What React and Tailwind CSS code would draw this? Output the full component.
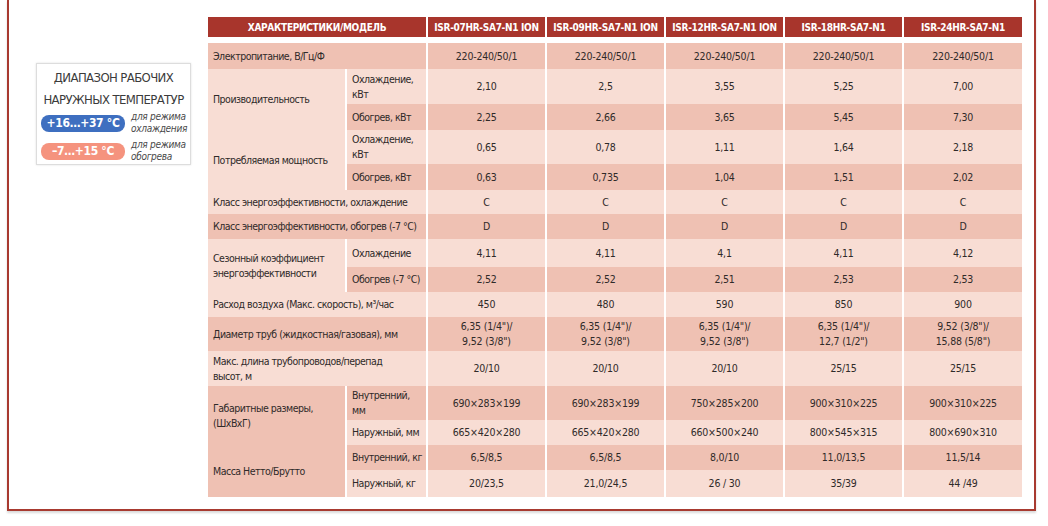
import React from 'react';

const models = ['ISR-07HR-SA7-N1 ION', 'ISR-09HR-SA7-N1 ION', 'ISR-12HR-SA7-N1 ION', 'ISR-18HR-SA7-N1', 'ISR-24HR-SA7-N1'];

const LIGHT = 'bg-[#f8ddd4]';
const DARK = 'bg-[#efc1b3]';

const diam = ['6,35 (1/4")/\n9,52 (3/8")', '6,35 (1/4")/\n9,52 (3/8")', '6,35 (1/4")/\n9,52 (3/8")', '6,35 (1/4")/\n12,7 (1/2")', '9,52 (3/8")/\n15,88 (5/8")'];

// group: подпись объединённой ячейки (на 2 строки), sub: подпись второго столбца
const rows = [
  { label: 'Электропитание, В/Гц/Ф', dark: true, vals: Array(5).fill('220-240/50/1') },
  { group: 'Производительность', groupDark: false, sub: 'Охлаждение,\nкВт', dark: false, vals: ['2,10', '2,5', '3,55', '5,25', '7,00'] },
  { sub: 'Обогрев, кВт', dark: true, vals: ['2,25', '2,66', '3,65', '5,45', '7,30'] },
  { group: 'Потребляемая мощность', groupDark: false, sub: 'Охлаждение,\nкВт', dark: false, vals: ['0,65', '0,78', '1,11', '1,64', '2,18'] },
  { sub: 'Обогрев, кВт', dark: true, vals: ['0,63', '0,735', '1,04', '1,51', '2,02'] },
  { label: 'Класс энергоэффективности, охлаждение', dark: false, vals: Array(5).fill('C') },
  { label: 'Класс энергоэффективности, обогрев (-7 °C)', dark: true, vals: Array(5).fill('D') },
  { group: 'Сезонный коэффициент\nэнергоэффективности', groupDark: false, sub: 'Охлаждение', dark: false, vals: ['4,11', '4,11', '4,1', '4,11', '4,12'] },
  { sub: 'Обогрев (-7 °C)', dark: true, vals: ['2,52', '2,52', '2,51', '2,53', '2,53'] },
  { label: 'Расход воздуха (Макс. скорость), м³/час', dark: false, vals: ['450', '480', '590', '850', '900'] },
  { label: 'Диаметр труб (жидкостная/газовая), мм', dark: true, vals: diam },
  { label: 'Макс. длина трубопроводов/перепад\nвысот, м', dark: false, vals: ['20/10', '20/10', '20/10', '25/15', '25/15'] },
  { group: 'Габаритные размеры,\n(ШхВхГ)', groupDark: true, sub: 'Внутренний,\nмм', dark: true, vals: ['690×283×199', '690×283×199', '750×285×200', '900×310×225', '900×310×225'] },
  { sub: 'Наружный, мм', dark: false, vals: ['665×420×280', '665×420×280', '660×500×240', '800×545×315', '800×690×310'] },
  { group: 'Масса Нетто/Брутто', groupDark: true, sub: 'Внутренний, кг', dark: true, vals: ['6,5/8,5', '6,5/8,5', '8,0/10', '11,0/13,5', '11,5/14'] },
  { sub: 'Наружный, кг', dark: false, vals: ['20/23,5', '21,0/24,5', '26 / 30', '35/39', '44 /49'] },
];

const Lines = ({ text }) =>
  text.split('\n').map((t, i) => (
    <span key={i} className="block whitespace-nowrap">{t}</span>
  ));

const TempRange = () => (
  <div className="w-[155px] h-[102px] border border-[#dddddd] shadow-[0_0_2px_rgba(0,0,0,0.12)] bg-white flex flex-col pt-[3px]">
    <div className="text-[13px] leading-[22px] text-[#3b3b3b] text-center tracking-[-0.6px] whitespace-nowrap">
      <span className="block">ДИАПАЗОН РАБОЧИХ</span>
      <span className="block">НАРУЖНЫХ ТЕМПЕРАТУР</span>
    </div>
    <div className="pl-[4px] flex flex-col gap-[4px]">
      <div className="flex items-center gap-[6px] h-[24px]">
        <span className="w-[84px] h-[17px] shrink-0 rounded-[8px] bg-[#3e6fc0] text-white font-bold text-[12px] tracking-[-0.3px] leading-[17px] text-center whitespace-nowrap">+16…+37 °C</span>
        <span className="italic text-[10px] leading-[12px] tracking-[-0.3px] text-[#4a4a4a] whitespace-nowrap"><span className="block">для режима</span><span className="block">охлаждения</span></span>
      </div>
      <div className="flex items-center gap-[6px] h-[24px]">
        <span className="w-[84px] h-[17px] shrink-0 rounded-[8px] bg-[#f5937e] text-white font-bold text-[12px] tracking-[-0.3px] leading-[17px] text-center whitespace-nowrap">–7…+15 °C</span>
        <span className="italic text-[10px] leading-[12px] tracking-[-0.3px] text-[#4a4a4a] whitespace-nowrap"><span className="block">для режима</span><span className="block">обогрева</span></span>
      </div>
    </div>
  </div>
);

const cols = 'grid-cols-[137px_79px_117px_117px_117px_117px_118px]';

const SpecTable = () => (
  <div className="flex flex-col gap-[6px] text-[#2f2a29]">
    <div className={`grid ${cols} gap-x-[2px] h-[20px] text-white font-bold text-[10px] tracking-[-0.3px] whitespace-nowrap`}>
      <div className="col-span-2 bg-[#a8352c] flex items-center justify-center">ХАРАКТЕРИСТИКИ/МОДЕЛЬ</div>
      {models.map((m) => (
        <div key={m} className="bg-[#a8352c] flex items-center justify-center">{m}</div>
      ))}
    </div>
    <div className={`grid ${cols} gap-x-[2px] grid-rows-[26px_35px_26px_34px_26px_24px_25px_28px_25px_25px_34px_35px_34px_25px_25px_27px] text-[10.5px] leading-[15px]`}>
      {rows.map((r, i) => (
        <React.Fragment key={i}>
          {r.label && (
            <div className={`col-span-2 ${r.dark ? DARK : LIGHT} flex items-center pl-[5px] tracking-[-0.5px]`}>
              <div><Lines text={r.label} /></div>
            </div>
          )}
          {r.group && (
            <div className={`row-span-2 ${r.groupDark ? DARK : LIGHT} flex items-center pl-[5px] tracking-[-0.5px]`}>
              <div><Lines text={r.group} /></div>
            </div>
          )}
          {r.sub && (
            <div className={`${r.dark ? DARK : LIGHT} flex items-center pl-[5px] tracking-[-0.5px]`}>
              <div><Lines text={r.sub} /></div>
            </div>
          )}
          {r.vals.map((v, j) => (
            <div key={j} className={`${r.dark ? DARK : LIGHT} flex items-center justify-center text-center tracking-[-0.2px]`}>
              <div><Lines text={v} /></div>
            </div>
          ))}
        </React.Fragment>
      ))}
    </div>
  </div>
);

export default function App() {
  return (
    <div className="w-[1048px] h-[526px] bg-white overflow-hidden font-['DejaVu_Sans_Condensed','Liberation_Sans',sans-serif]">
      <div className="ml-[7px] w-[1029px] h-[511px] border-x-2 border-b-2 border-[#a83a30] shadow-[0_2px_2px_rgba(0,0,0,0.15)] flex">
        <div className="ml-[27px] mt-[63px]">
          <TempRange />
        </div>
        <div className="ml-[17px] mt-[17px]">
          <SpecTable />
        </div>
      </div>
    </div>
  );
}
